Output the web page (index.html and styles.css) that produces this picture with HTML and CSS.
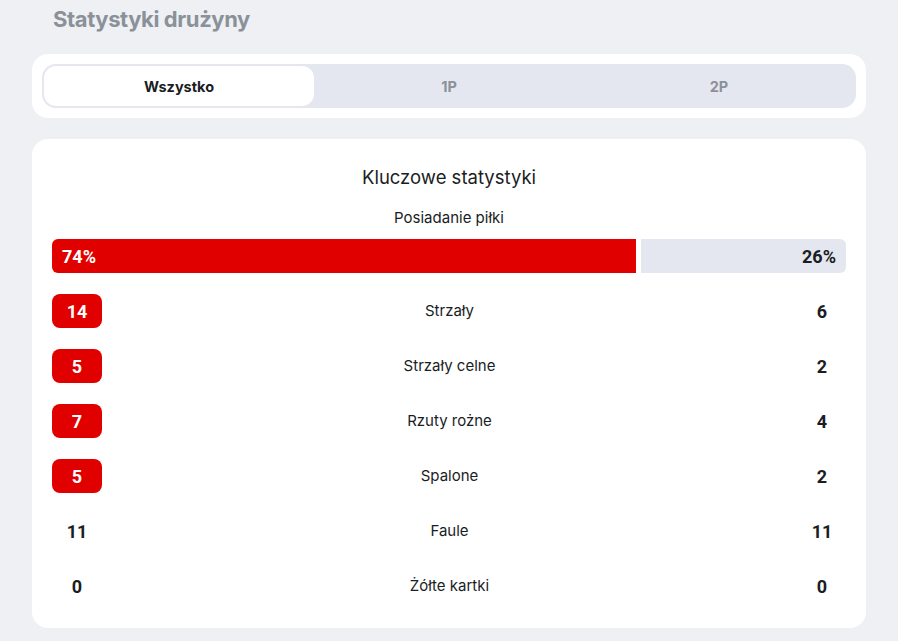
FILE: index.html
```html
<!DOCTYPE html>
<html lang="pl">
<head>
    <meta charset="UTF-8">
    <meta name="viewport" content="width=device-width, initial-scale=1.0">
    <title>Statystyki drużyny</title>
    <link rel="stylesheet" href="styles.css">
</head>
<body>

<div class="page">
    <h2 class="page-title">Statystyki drużyny</h2>

    <!-- Period tabs -->
    <div class="card tabs-card">
        <div class="tabs">
            <div class="tab active">Wszystko</div>
            <div class="tab">1P</div>
            <div class="tab">2P</div>
        </div>
    </div>

    <!-- Key stats -->
    <div class="card stats-card">
        <div class="stats-title">Kluczowe statystyki</div>

        <div class="stat-label possession-label">Posiadanie piłki</div>
        <div class="possession">
            <div class="bar home" style="flex: 74"><span>74%</span></div>
            <div class="bar away" style="flex: 26"><span>26%</span></div>
        </div>

        <div class="stat-rows">
            <div class="stat-row">
                <div class="value home win">14</div>
                <div class="stat-label">Strzały</div>
                <div class="value away">6</div>
            </div>
            <div class="stat-row">
                <div class="value home win">5</div>
                <div class="stat-label">Strzały celne</div>
                <div class="value away">2</div>
            </div>
            <div class="stat-row">
                <div class="value home win">7</div>
                <div class="stat-label">Rzuty rożne</div>
                <div class="value away">4</div>
            </div>
            <div class="stat-row">
                <div class="value home win">5</div>
                <div class="stat-label">Spalone</div>
                <div class="value away">2</div>
            </div>
            <div class="stat-row">
                <div class="value home">11</div>
                <div class="stat-label">Faule</div>
                <div class="value away">11</div>
            </div>
            <div class="stat-row">
                <div class="value home">0</div>
                <div class="stat-label">Żółte kartki</div>
                <div class="value away">0</div>
            </div>
        </div>
    </div>
</div>

</body>
</html>
```

FILE: styles.css
```css
body {
    margin: 0;
    background-color: #eff0f4;
    font-family: Inter, "Noto Sans", sans-serif;
    color: #1a1d24;
}

.page {
    padding: 5px 32px 0;
}

.page-title {
    margin: 0 0 21px 21px;
    font-size: 22px;
    line-height: 28px;
    font-weight: 700;
    color: #8b9199;
    letter-spacing: -0.4px;
}

.card {
    background-color: white;
    border-radius: 16px;
}

/* Tabs */
.tabs-card {
    padding: 10px;
}

.tabs {
    display: flex;
    background-color: #e4e7ef;
    border-radius: 14px;
    padding: 2px;
}

.tab {
    flex: 1;
    height: 40px;
    display: flex;
    align-items: center;
    justify-content: center;
    font-size: 14.5px;
    font-weight: 700;
    color: #8b9199;
    border-radius: 12px;
}

.tab.active {
    background-color: white;
    color: #1a1d24;
}

/* Stats */
.stats-card {
    margin-top: 21px;
    padding: 26px 20px 25px;
}

.stats-title {
    text-align: center;
    font-size: 18.5px;
    line-height: 24px;
}

.stat-label {
    font-size: 15px;
    line-height: 20px;
    text-align: center;
}

.possession-label {
    margin-top: 19px;
}

.possession {
    display: flex;
    gap: 5px;
    margin-top: 11px;
}

.bar {
    height: 34px;
    display: flex;
    align-items: center;
    font-family: Roboto, sans-serif;
    font-size: 18px;
    font-weight: 700;
}

.bar span {
    padding: 0 10px;
}

.bar.home {
    background-color: #e10000;
    color: white;
    border-radius: 6px 0 0 6px;
}

.bar.away {
    background-color: #e4e7ef;
    justify-content: flex-end;
    border-radius: 0 6px 6px 0;
}

.stat-rows {
    display: flex;
    flex-direction: column;
    gap: 21px;
    margin-top: 21px;
}

.stat-row {
    display: flex;
    align-items: center;
    justify-content: space-between;
    height: 34px;
}

.value {
    width: 50px;
    height: 34px;
    display: flex;
    align-items: center;
    justify-content: center;
    font-family: Roboto, sans-serif;
    font-size: 18px;
    font-weight: 700;
    border-radius: 8px;
}

.value.away {
    margin-right: -1px;
}

.value.win {
    background-color: #e10000;
    color: white;
}
```
